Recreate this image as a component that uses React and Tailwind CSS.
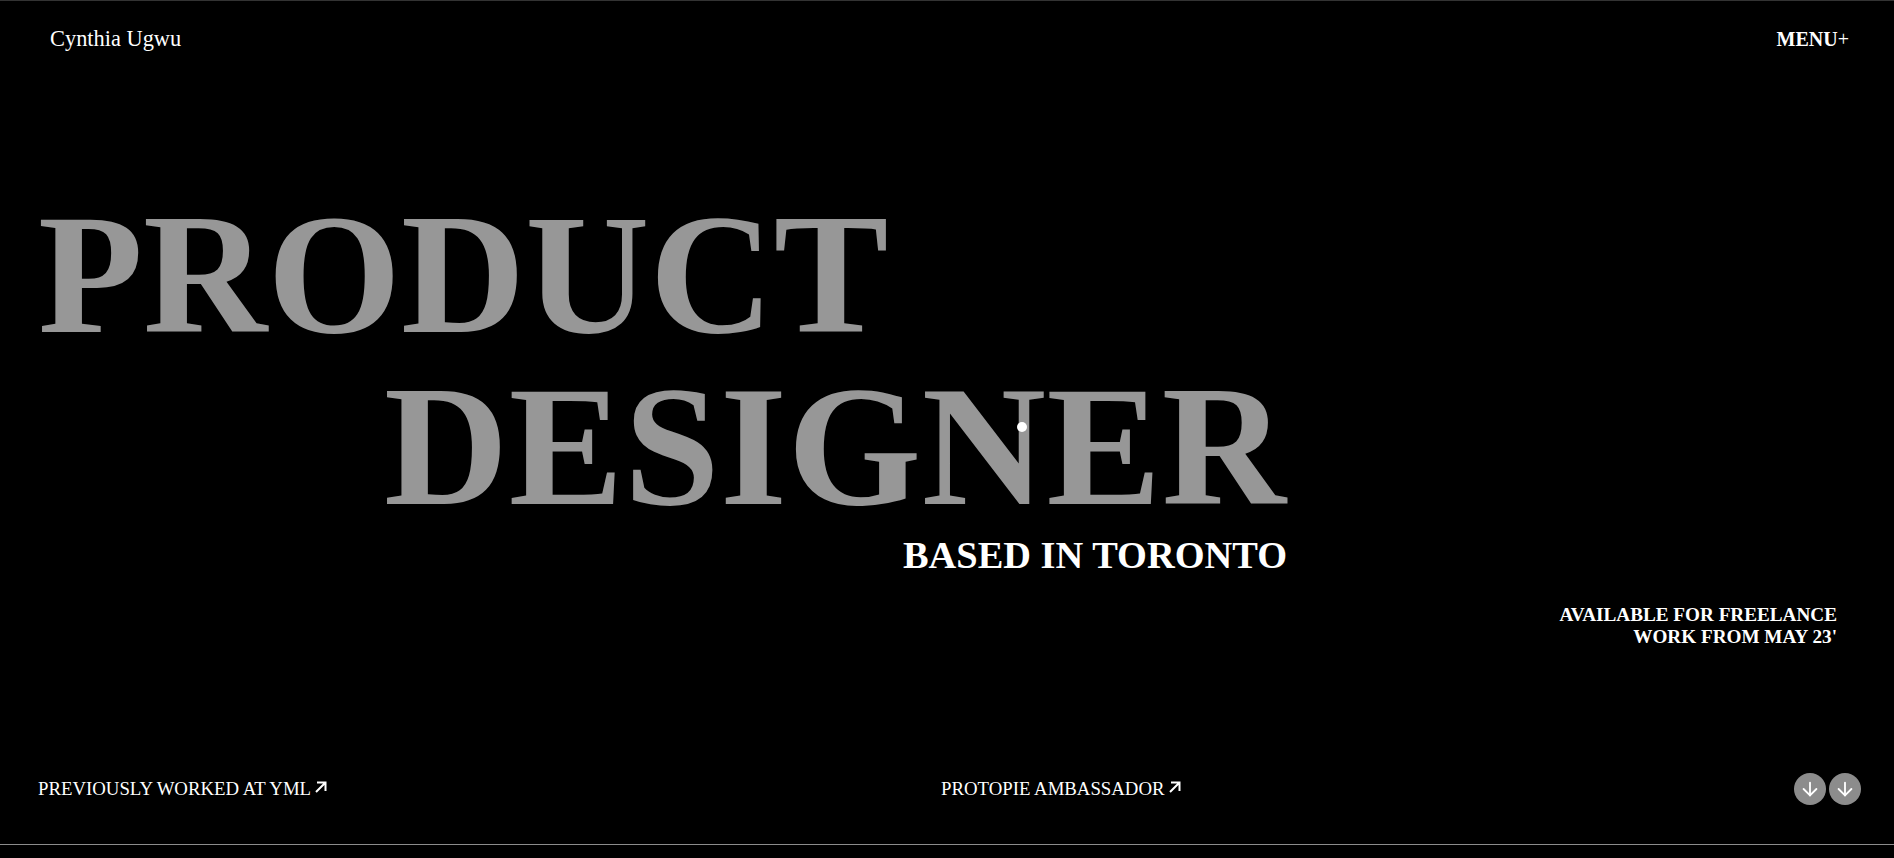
import React from 'react';
import { ArrowDown } from 'lucide-react';

const serif = "font-['Liberation_Serif','Times_New_Roman',serif]";

function RoundArrow() {
  return (
    <div className="w-8 h-8 rounded-full bg-[#8c8c8c] flex items-center justify-center">
      <ArrowDown className="w-[22px] h-[22px] text-white" strokeWidth={2} />
    </div>
  );
}

function LinkArrow() {
  return (
    <svg viewBox="0 0 12 12" className="w-3 h-3 ml-1 mb-1" fill="none" stroke="currentColor" strokeWidth="2">
      <path d="M2 1.5h8.5V10M10.5 1.5L1 11" />
    </svg>
  );
}

export default function App() {
  return (
    <div className={`${serif} relative w-full h-[858px] bg-black text-white overflow-hidden`}>
      <div className="h-[844px] border-t border-[#333] flex flex-col">
        {/* top bar */}
        <header className="flex justify-between items-center pl-[50px] pr-[45px] pt-[23px]">
          <span className="text-[22.4px] leading-[30px]">Cynthia Ugwu</span>
          <span className="text-[20px] leading-[30px] font-bold">MENU<span className="font-normal">+</span></span>
        </header>

        {/* hero */}
        <main className="flex flex-col pl-[38px] pt-[134px]">
          <h1 className="text-[172px] leading-[172px] font-bold text-[#979797] whitespace-nowrap">PRODUCT</h1>
          <h1 className="text-[172px] leading-[172px] font-bold text-[#979797] whitespace-nowrap pl-[346px] tracking-[0.5px]">DESIGNER</h1>
          <div className="w-[1249px] text-right text-[38.4px] leading-[46px] font-bold">BASED IN TORONTO</div>
        </main>

        <div className="self-end pr-[57px] pt-[26px] text-right text-[19.2px] leading-[22px] font-bold">
          AVAILABLE FOR FREELANCE<br />WORK FROM MAY 23'
        </div>

        {/* footer links */}
        <footer className="mt-auto flex items-center pl-[38px] pr-[33px] pb-[39px]">
          <div className="w-[903px] flex items-center text-[18.8px] leading-[24px]">
            PREVIOUSLY WORKED AT YML
            <LinkArrow />
          </div>
          <div className="flex items-center text-[18.8px] leading-[24px]">
            PROTOPIE AMBASSADOR
            <LinkArrow />
          </div>
          <div className="ml-auto flex gap-[3px]">
            <RoundArrow />
            <RoundArrow />
          </div>
        </footer>
      </div>
      <div className="h-px bg-[#8c8c8c]" />

      {/* cursor dot */}
      <div className="absolute left-[1017px] top-[422px] w-[10px] h-[10px] rounded-full bg-white" />
    </div>
  );
}
